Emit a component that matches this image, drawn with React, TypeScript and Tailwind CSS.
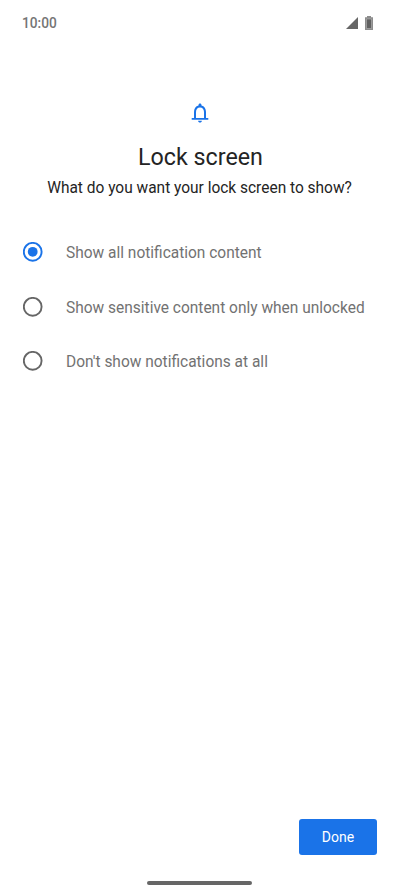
import React, { useState } from "react";

const options = [
  "Show all notification content",
  "Show sensitive content only when unlocked",
  "Don't show notifications at all",
];

const StatusBar = () => (
  <header className="flex h-[46px] items-center justify-between pr-[27px] pl-[22px] text-[#666666]">
    <span className="origin-left scale-x-[0.98] text-[14px] leading-none font-medium text-[#757575]">
      10:00
    </span>
    <div className="flex items-center gap-[7px]">
      <svg width="12" height="12" viewBox="0 0 12 12" fill="currentColor">
        <path d="M12 0v12H0z" />
      </svg>
      <svg width="8" height="14" viewBox="0 0 8 14">
        <path d="M2 0h4v1.3h2V14H0V1.3h2z" fill="#8c8c8c" />
        <path d="M1.5 3h5v9.5h-5z" fill="#606060" stroke="#b5b5b5" strokeWidth=".6" />
      </svg>
    </div>
  </header>
);

const BellIcon = () => (
  <svg width="24" height="24" viewBox="0 0 24 24" fill="#1a73e8">
    <path d="M12 21.6c1.1 0 1.9-.8 1.9-1.8h-3.8c0 1 .8 1.8 1.9 1.8zm6-4.7v-6c0-3.07-1.63-5.64-4.5-6.32V4c0-.83-.67-1.5-1.5-1.5s-1.5.67-1.5 1.5v.58C7.64 5.26 6 7.82 6 10.9v6H3.7v1.9h16.6v-1.9H18zm-2 0H8v-6c0-2.48 1.51-4.5 4-4.5s4 2.02 4 4.5v6z" />
  </svg>
);

const Radio = ({ checked }: { checked: boolean }) => (
  <svg width="20" height="20" viewBox="0 0 20 20" fill="none">
    <circle
      cx="9.7"
      cy="9.8"
      r="8.9"
      strokeWidth="1.9"
      stroke={checked ? "#1a73e8" : "#666666"}
    />
    {checked && <circle cx="9.7" cy="9.8" r="4.9" fill="#1a73e8" />}
  </svg>
);

export default function App() {
  const [selected, setSelected] = useState(0);

  return (
    <div className="flex h-[895px] w-[400px] flex-col bg-white font-['Roboto',sans-serif]">
      <StatusBar />
      <main className="flex grow flex-col">
        <div className="flex flex-col items-center pt-[55px] text-[#242424]">
          <BellIcon />
          <h1 className="mt-[16px] scale-x-[0.97] text-[24px] leading-[32px]">
            Lock screen
          </h1>
          <p className="mt-[3.4px] scale-x-[0.967] text-[16px] leading-[24px]">
            What do you want your lock screen to show?
          </p>
        </div>
        <div className="mt-[24.6px] flex flex-col" role="radiogroup">
          {options.map((option, index) => (
            <button
              key={option}
              role="radio"
              aria-checked={selected === index}
              onClick={() => setSelected(index)}
              className="flex h-[54.4px] items-center gap-[23px] pl-[23px] text-left text-[16px] text-[#727272]"
            >
              <Radio checked={selected === index} />
              <span className="origin-left scale-x-[0.968] pt-[2.4px]">
                {option}
              </span>
            </button>
          ))}
        </div>
      </main>
      <footer className="flex h-[76px] flex-col">
        <button className="mr-[23px] h-[35.5px] w-[78px] self-end rounded-[3px] bg-[#1a73e8] pt-[2px] text-[14px] tracking-[0.1px] text-white">
          Done
        </button>
        <div className="mt-[26px] mr-px h-[4px] w-[105px] self-center rounded-full bg-[#666666]" />
      </footer>
    </div>
  );
}
